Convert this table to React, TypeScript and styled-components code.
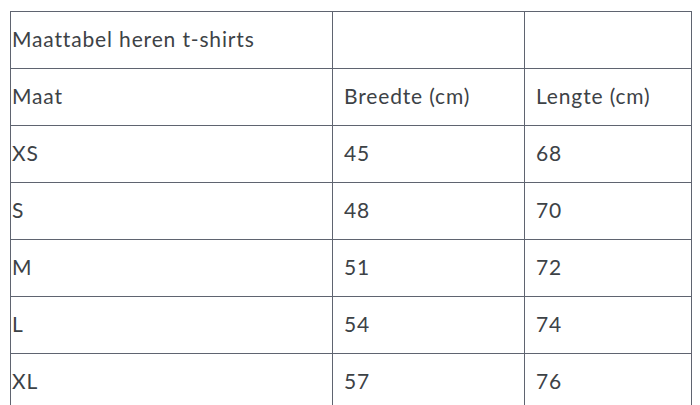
import React from 'react';
import styled, { createGlobalStyle } from 'styled-components';

const GlobalStyle = createGlobalStyle`
  html, body {
    margin: 0;
    padding: 0;
    background: #ffffff;
  }
  body {
    font-family: Lato, "Open Sans", sans-serif;
  }
`;

const Page = styled.div`
  padding: 11px 9px 0 10px;
  height: 405px;
  overflow: hidden;
  box-sizing: border-box;
`;

const SizeTable = styled.table`
  border-collapse: collapse;
  table-layout: fixed;
  width: 681px;
  color: #3d4246;
  font-size: 21px;
  letter-spacing: 0.85px;
`;

const Cell = styled.td<{ $first?: boolean }>`
  border: 1px solid #5f6470;
  height: 53px;
  padding: 0 0 3px ${props => (props.$first ? '1px' : '11px')};
  vertical-align: middle;
  text-align: left;
  white-space: nowrap;
`;

const rows: [string, string, string][] = [
  ['Maat', 'Breedte (cm)', 'Lengte (cm)'],
  ['XS', '45', '68'],
  ['S', '48', '70'],
  ['M', '51', '72'],
  ['L', '54', '74'],
  ['XL', '57', '76'],
];

export default function App() {
  return (
    <>
      <GlobalStyle />
      <Page>
        <SizeTable>
          <colgroup>
            <col style={{ width: 322 }} />
            <col style={{ width: 192 }} />
            <col style={{ width: 167 }} />
          </colgroup>
          <tbody>
            <tr>
              <Cell $first>Maattabel heren t-shirts</Cell>
              <Cell />
              <Cell />
            </tr>
            {rows.map(([maat, breedte, lengte]) => (
              <tr key={maat}>
                <Cell $first>{maat}</Cell>
                <Cell>{breedte}</Cell>
                <Cell>{lengte}</Cell>
              </tr>
            ))}
          </tbody>
        </SizeTable>
      </Page>
    </>
  );
}
